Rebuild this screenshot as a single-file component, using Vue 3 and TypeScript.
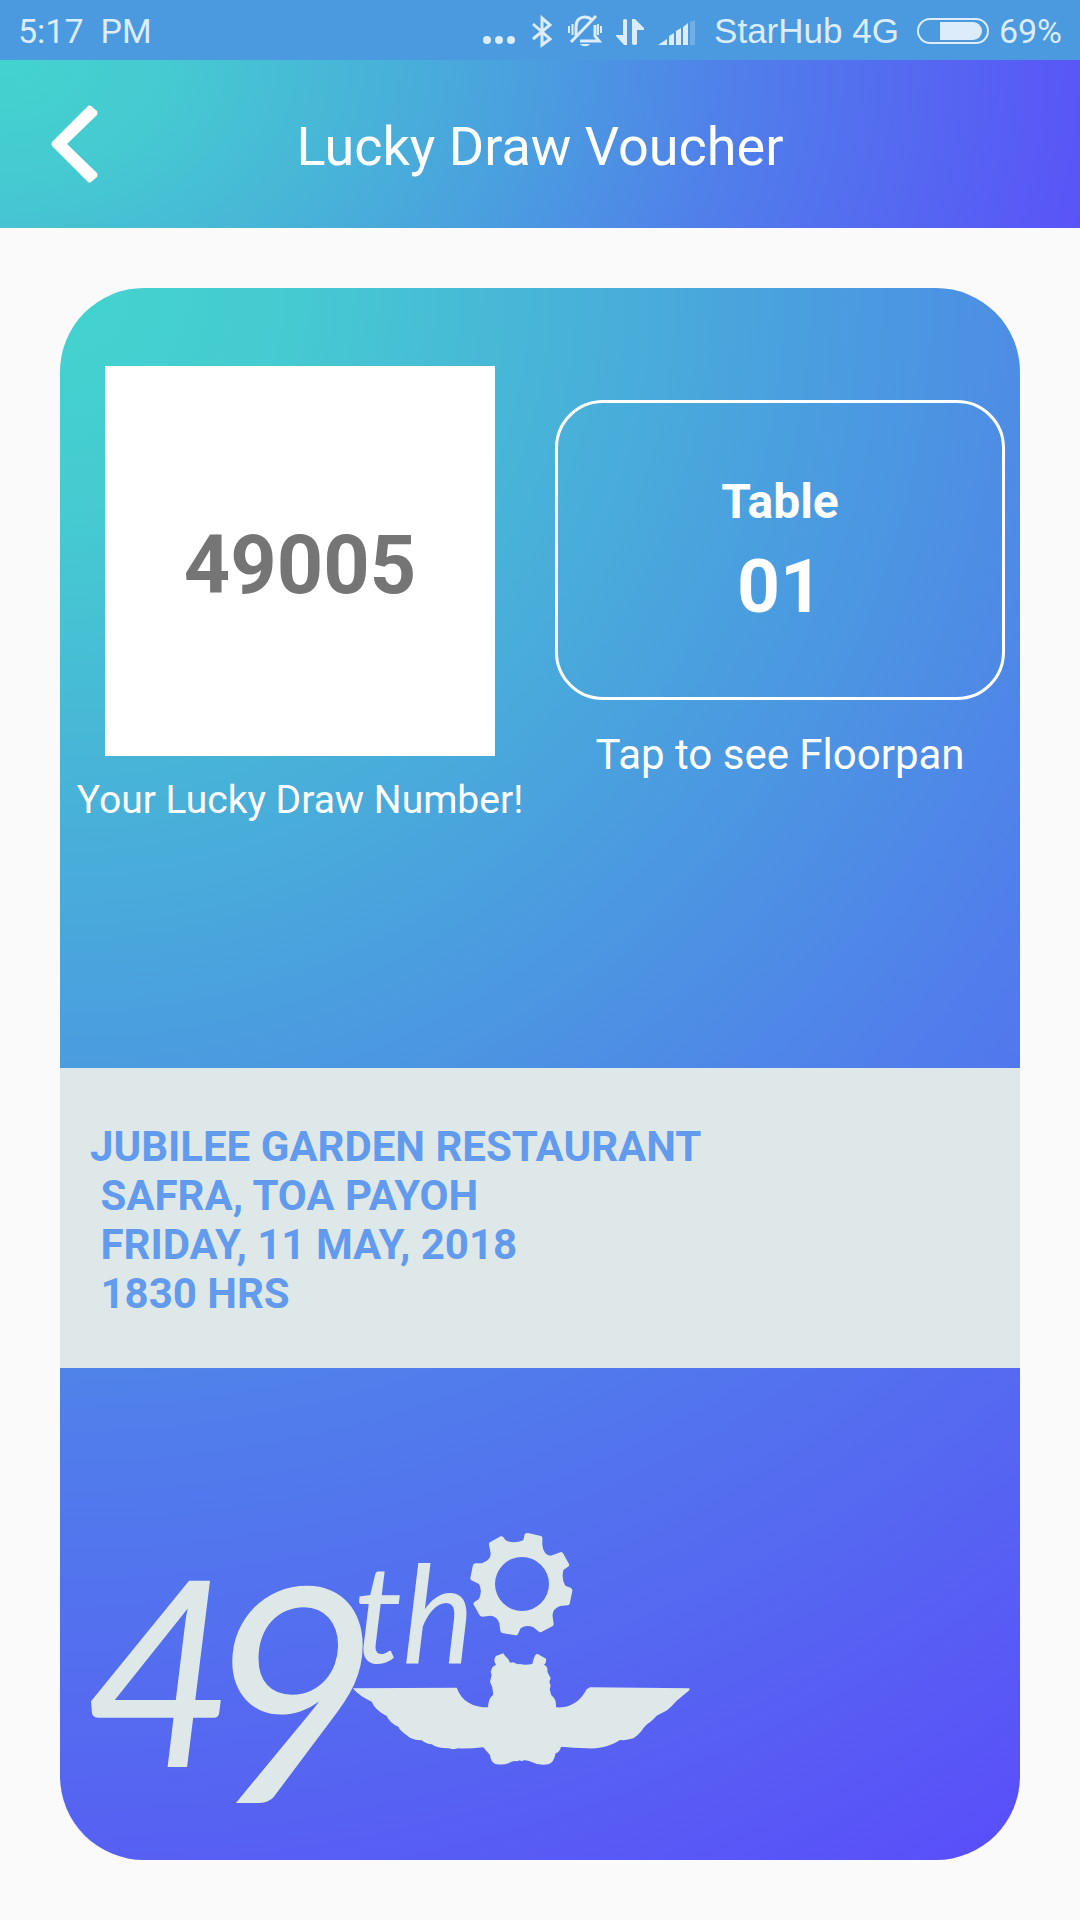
<script setup lang="ts">
const clock = '5:17\u00a0 PM'
const carrier = 'StarHub 4G'
const battery = '69%'
const luckyNumber = '49005'
const tableNumber = '01'
const venue: string[] = [
  'JUBILEE GARDEN RESTAURANT',
  ' SAFRA, TOA PAYOH',
  ' FRIDAY, 11 MAY, 2018',
  ' 1830 HRS',
]
</script>

<template>
  <div class="screen">
    <div class="status">
      <span>{{ clock }}</span>
      <div class="status-right">
        <svg width="34" height="34" viewBox="0 0 34 34" fill="currentColor" aria-hidden="true">
          <circle cx="5" cy="26" r="4" /><circle cx="17" cy="26" r="4" /><circle cx="29" cy="26" r="4" />
        </svg>
        <svg class="bluetooth" width="20" height="34" viewBox="0 0 20 34" fill="none" stroke="currentColor" stroke-width="3" aria-hidden="true">
          <path d="M1 10 18 25 10 31V4l8 7L1 25" />
        </svg>
        <svg class="bell" width="34" height="34" viewBox="0 0 34 34" fill="none" stroke="currentColor" aria-hidden="true">
          <path d="M8 22V13C8 6 12 3 17 3c3 0 5 1 7 3M27 11v11l4 5H12" stroke-width="3" />
          <path d="M28 2 3 28" stroke-width="3" />
          <path d="M1 12v7M4.500 10v11M30 10v11M33 12v7" stroke-width="2" />
          <path d="M12 30h10c-2 3-8 3-10 0Z" fill="currentColor" stroke="none" />
        </svg>
        <svg class="arrows" width="28" height="34" viewBox="0 0 28 34" fill="currentColor" aria-hidden="true">
          <path d="M7 6q2-2 4 0v25H8L0 22v-1h7ZM16 5h3l9 9v2h-7v14q-2 2-5 0Z" />
        </svg>
        <svg class="signal" width="38" height="34" viewBox="0 0 38 34" fill="currentColor" aria-hidden="true">
          <path d="m0 31 9-6v6ZM11 22l5-3v12h-5ZM18 17l5-3v17h-5ZM25 13l5-4v22h-5Z" />
          <path d="m32 8 5-2v25h-5Z" opacity="0.25" />
        </svg>
        <span class="carrier">{{ carrier }}</span>
        <svg class="battery" width="72" height="34" viewBox="0 0 72 34" aria-hidden="true">
          <rect x="1" y="5" width="70" height="24" rx="12" fill="none" stroke="currentColor" stroke-width="2" />
          <path d="M23 8h33a9 9 0 0 1 0 18H23Z" fill="currentColor" />
        </svg>
        <span>{{ battery }}</span>
      </div>
    </div>

    <header class="header">
      <button class="back" type="button" aria-label="Back">
        <svg width="48" height="80" viewBox="0 0 48 80" aria-hidden="true">
          <path d="M37 2q2-1 3 0l6 5q1 2 0 4L16 40l30 29q1 2 0 4l-6 5q-1 1-3 0L1 42q-1-2 0-4Z" fill="#fff" />
        </svg>
      </button>
      <h1>Lucky Draw Voucher</h1>
    </header>

    <main class="card">
      <section class="top">
        <div class="column">
          <div class="number">{{ luckyNumber }}</div>
          <p class="number-caption">Your Lucky Draw Number!</p>
        </div>
        <div class="column table-column">
          <button class="table-button" type="button">
            <span class="table-label">Table</span>
            <span class="table-number">{{ tableNumber }}</span>
          </button>
          <p class="table-caption">Tap to see Floorpan</p>
        </div>
      </section>

      <section class="venue">
        <div v-for="line in venue" :key="line" class="venue-line">{{ line }}</div>
      </section>

      <section class="brand">
        <svg class="logo" width="600" height="290" viewBox="0 0 600 290" role="img" aria-label="49th">
          <text x="-6" y="247" font-size="260">4<tspan dy="36" dx="-30" font-size="300">9</tspan></text>
          <text x="264" y="143" font-size="136">th</text>
          <g transform="translate(240 -20) scale(0.333333)">
            <path
              fill-rule="evenodd"
              d="M584 103Q588 98 594 99L633 108Q638 110 637 116V135Q640 165 662 167L693 156Q698 156 700 161L717 192Q719 197 714 200L700 210Q694 240 706 257L723 264Q728 268 727 273L719 311Q717 316 712 316L690 318Q665 328 668 350L671 372Q671 377 667 379L634 396Q629 398 625 394L610 382Q590 372 572 385L564 402Q561 407 556 406L517 399Q512 398 511 392L508 370Q503 350 482 347L457 350Q452 350 449 346L431 314Q429 309 433 306L447 297Q458 272 447 252L424 241Q420 238 421 233L429 195Q431 190 436 190H456Q483 180 482 160L477 134Q476 129 480 127L512 109Q517 107 520 112L527 121Q550 133 580 121ZM576 171a81 81 0 1 0 0 162a81 81 0 1 0 0-162Z"
            />
          </g>
          <g transform="translate(250 110) scale(0.333333)">
            <path
              d="M38 175L350 173C365 215 400 232 444 232Q445 205 459 195Q461 175 450 155L455 135L452 125L457 112L468 104Q458 90 468 78L490 70L496 79Q504 84 510 98L520 97Q530 104 540 102Q555 106 577 102Q580 85 586 75L592 71L618 86Q620 100 612 104Q625 110 622 125L632 145L628 155L632 167L629 178L634 196Q650 208 648 232C700 236 725 205 740 178L750 172L1046 175Q1052 176 1046 182L1010 212Q990 235 976 244Q960 252 950 257Q940 268 930 277Q918 283 905 302Q895 315 880 325Q860 332 840 330Q825 340 810 345Q780 357 740 355Q700 353 663 350Q660 365 647 370Q642 398 625 403Q595 407 575 396Q560 389 552 391L545 394L539 391L532 394Q522 390 505 400Q490 406 466 402Q452 396 450 375Q440 365 430 352Q380 357 355 355Q340 360 325 355Q290 355 275 343Q260 343 245 331Q215 330 202 317Q180 302 175 290Q150 280 140 258Q105 240 95 215Q60 200 38 175Z"
            />
          </g>
        </svg>
      </section>
    </main>
  </div>
</template>

<style>
body {
  background: #fafafa;
}
</style>

<style scoped>
.screen {
  font-family: Roboto, 'Liberation Sans', sans-serif;
  color: #fff;
  background: #fafafa;
}

.status {
  display: flex;
  align-items: center;
  justify-content: space-between;
  height: 60px;
  padding: 2px 18px 0;
  box-sizing: border-box;
  background: #4b9ae0;
  color: #dcecfb;
  font-size: 34px;
  line-height: 58px;
  white-space: nowrap;
}

.status-right {
  display: flex;
  align-items: center;
}

.status svg {
  flex: none;
}

.bluetooth {
  margin-left: 16px;
}

.bell {
  margin-left: 16px;
}

.arrows {
  margin-left: 14px;
}

.signal {
  margin-left: 14px;
}

.carrier {
  margin-left: 18px;
  font-family: 'Liberation Sans', sans-serif;
  font-size: 35px;
}

.battery {
  margin: 0 10px 0 18px;
}

.header {
  display: grid;
  grid-template-columns: 150px 1fr 150px;
  align-items: center;
  height: 168px;
  background: radial-gradient(
    1120px 800px at 0 0,
    #43d3ce 0%,
    #45cad1 15%,
    #48b3d8 33%,
    #4a9edf 48%,
    #5080ea 65%,
    #5567f1 83%,
    #5a52f8 100%
  );
}

.back {
  display: flex;
  align-items: center;
  height: 168px;
  margin: 0;
  padding: 0 0 0 51px;
  border: 0;
  background: none;
  cursor: pointer;
}

h1 {
  margin: 0;
  padding-top: 6px;
  font-size: 54px;
  font-weight: 400;
  line-height: 64px;
  text-align: center;
}

.card {
  margin: 60px;
  overflow: hidden;
  border-radius: 84px;
  background: radial-gradient(
    circle farthest-corner at 0 0,
    #43d3ce 0%,
    #45cbd1 12%,
    #48b3d8 27%,
    #4a9edf 41%,
    #4d8fe4 51%,
    #507feb 61%,
    #5663f2 83%,
    #5a4dfa 100%
  );
}

.top {
  display: flex;
  min-height: 780px;
}

.column {
  flex: 1;
  display: flex;
  flex-direction: column;
  align-items: center;
  padding-top: 78px;
}

.table-column {
  padding-top: 112px;
}

.number {
  display: flex;
  align-items: center;
  justify-content: center;
  width: 390px;
  height: 390px;
  padding-top: 8px;
  box-sizing: border-box;
  background: #fff;
  color: #757575;
  font-size: 81px;
  font-weight: 700;
}

p {
  margin: 0;
  white-space: nowrap;
}

.number-caption {
  margin-top: 20px;
  font-size: 39px;
  line-height: 48px;
}

.table-button {
  display: flex;
  flex-direction: column;
  align-items: center;
  justify-content: center;
  width: 450px;
  height: 300px;
  padding: 4px 0 0;
  border: 3px solid #fff;
  border-radius: 48px;
  background: none;
  color: inherit;
  font-family: inherit;
  font-weight: 700;
  cursor: pointer;
}

.table-label {
  font-size: 48px;
  line-height: 56px;
}

.table-number {
  margin-top: 12px;
  font-size: 75px;
  line-height: 88px;
}

.table-caption {
  margin-top: 31px;
  font-size: 42px;
  line-height: 48px;
}

.venue {
  display: flex;
  flex-direction: column;
  justify-content: center;
  min-height: 300px;
  padding: 4px 30px 0;
  box-sizing: border-box;
  background: #dfe8e9;
  color: #629bee;
  font-size: 42px;
  font-weight: 700;
  line-height: 49px;
}

.venue-line {
  white-space: pre-wrap;
}

.brand {
  padding: 152px 30px 50px;
}

.logo {
  display: block;
  max-width: 100%;
  overflow: visible;
  fill: #dfe8e9;
  font-family: Lato, 'Liberation Sans', sans-serif;
  font-style: italic;
}
</style>
